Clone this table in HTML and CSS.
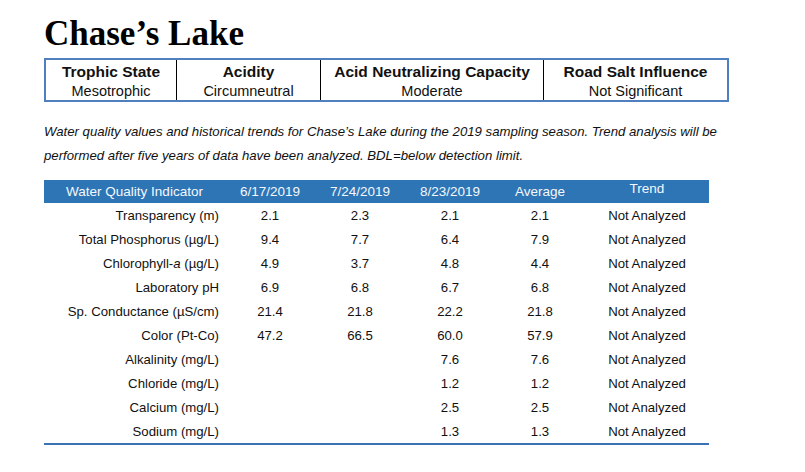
FILE: index.html
```html
<!DOCTYPE html>
<html>
<head>
  <title>Chase's Lake</title>
  <link rel="stylesheet" href="styles.css">
</head>
<body>
  <div class="page">
    <h1 class="title">Chase’s Lake</h1>

    <div class="summary">
      <div class="summary-cell">
        <div class="summary-label">Trophic State</div>
        <div class="summary-value">Mesotrophic</div>
      </div>
      <div class="summary-cell">
        <div class="summary-label">Acidity</div>
        <div class="summary-value">Circumneutral</div>
      </div>
      <div class="summary-cell">
        <div class="summary-label">Acid Neutralizing Capacity</div>
        <div class="summary-value">Moderate</div>
      </div>
      <div class="summary-cell">
        <div class="summary-label">Road Salt Influence</div>
        <div class="summary-value">Not Significant</div>
      </div>
    </div>

    <p class="caption">Water quality values and historical trends for Chase’s Lake during the 2019 sampling season. Trend analysis will be performed after five years of data have been analyzed. BDL=below detection limit.</p>

    <table class="data">
      <thead>
        <tr>
          <th class="col-name">Water Quality Indicator</th>
          <th class="col-val">6/17/2019</th>
          <th class="col-val">7/24/2019</th>
          <th class="col-val">8/23/2019</th>
          <th class="col-avg">Average</th>
          <th class="col-trend"><span class="raise">Trend</span></th>
        </tr>
      </thead>
      <tbody>
        <tr><td class="name">Transparency (m)</td><td>2.1</td><td>2.3</td><td>2.1</td><td>2.1</td><td>Not Analyzed</td></tr>
        <tr><td class="name">Total Phosphorus (µg/L)</td><td>9.4</td><td>7.7</td><td>6.4</td><td>7.9</td><td>Not Analyzed</td></tr>
        <tr><td class="name">Chlorophyll-<i>a</i> (µg/L)</td><td>4.9</td><td>3.7</td><td>4.8</td><td>4.4</td><td>Not Analyzed</td></tr>
        <tr><td class="name">Laboratory pH</td><td>6.9</td><td>6.8</td><td>6.7</td><td>6.8</td><td>Not Analyzed</td></tr>
        <tr><td class="name">Sp. Conductance (µS/cm)</td><td>21.4</td><td>21.8</td><td>22.2</td><td>21.8</td><td>Not Analyzed</td></tr>
        <tr><td class="name">Color (Pt-Co)</td><td>47.2</td><td>66.5</td><td>60.0</td><td>57.9</td><td>Not Analyzed</td></tr>
        <tr><td class="name">Alkalinity (mg/L)</td><td></td><td></td><td>7.6</td><td>7.6</td><td>Not Analyzed</td></tr>
        <tr><td class="name">Chloride (mg/L)</td><td></td><td></td><td>1.2</td><td>1.2</td><td>Not Analyzed</td></tr>
        <tr><td class="name">Calcium (mg/L)</td><td></td><td></td><td>2.5</td><td>2.5</td><td>Not Analyzed</td></tr>
        <tr><td class="name">Sodium (mg/L)</td><td></td><td></td><td>1.3</td><td>1.3</td><td>Not Analyzed</td></tr>
      </tbody>
    </table>
  </div>
</body>
</html>
```

FILE: styles.css
```css
body {
  margin: 0;
  padding: 0;
  background: #fff;
  color: #111;
  font-family: "Liberation Sans", Arial, sans-serif;
}
.page {
  padding: 14px 0 0 44px;
  width: 685px;
}
.title {
  margin: 0;
  font-family: "Liberation Serif", "Times New Roman", serif;
  font-size: 35px;
  line-height: 40px;
  font-weight: bold;
  color: #000;
}
.summary {
  margin-top: 4px;
  display: grid;
  grid-template-columns: 130px 144px 223px 1fr;
  border: 2px solid #4f7fbf;
  height: 40px;
}
.summary-cell {
  text-align: center;
  border-left: 1px solid #000;
}
.summary-cell:first-child {
  border-left: none;
}
.summary-label {
  font-weight: bold;
  font-size: 15.5px;
  line-height: 23px;
}
.summary-value {
  font-size: 14.5px;
  line-height: 17px;
}
.caption {
  margin: 18px 0 0 0;
  font-style: italic;
  font-size: 13.2px;
  line-height: 24px;
}
.data {
  margin-top: 12px;
  width: 665px;
  border-collapse: collapse;
  font-size: 13.2px;
  border-bottom: 2px solid #3b72b4;
}
.data th {
  background-color: #2e75b6;
  color: #f4f8fc;
  font-weight: normal;
  height: 23px;
  padding: 0;
  font-size: 13.5px;
  text-align: center;
}
.data td {
  height: 24px;
  padding: 0;
  text-align: center;
}
.data td.name {
  text-align: right;
  padding-right: 6px;
}
.col-name {
  width: 181px;
}
.col-val {
  width: 90px;
}
.col-avg {
  width: 90px;
}
.raise {
  position: relative;
  top: -3px;
}
```
